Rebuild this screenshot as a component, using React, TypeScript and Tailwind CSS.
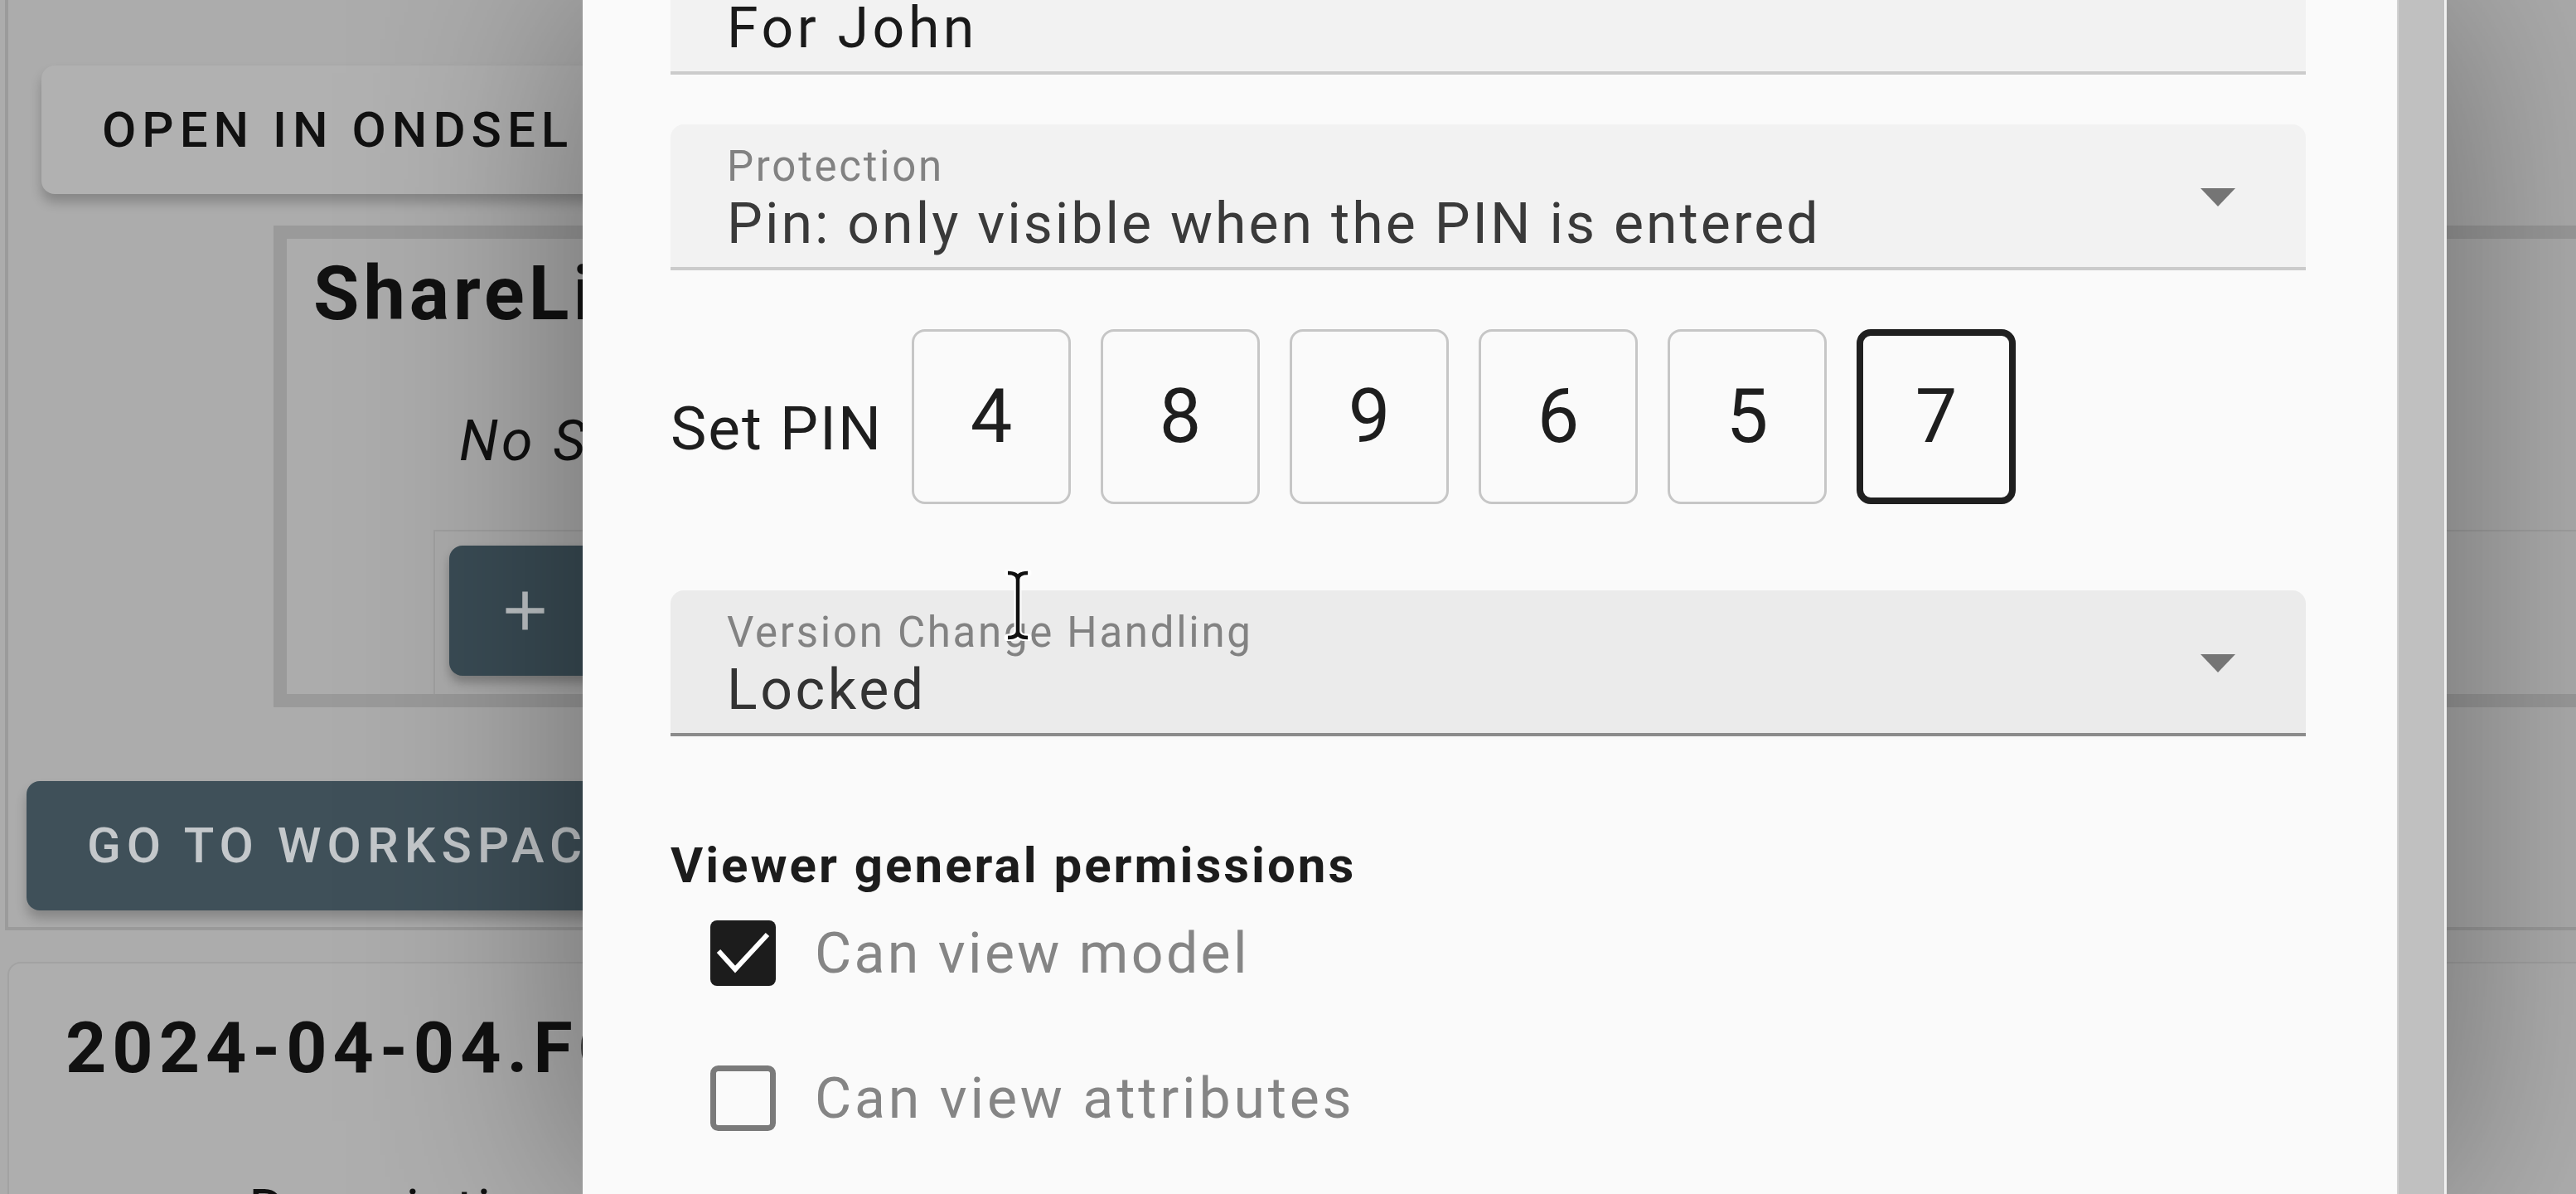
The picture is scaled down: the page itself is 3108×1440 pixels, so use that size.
import React from 'react';

const PIN = ['4', '8', '9', '6', '5', '7'];

function AddIcon() {
  return (
    <svg width="79" height="79" viewBox="0 0 24 24" fill="#c2c7ca">
      <path d="M19 13h-6v6h-2v-6H5v-2h6V5h2v6h6v2z" />
    </svg>
  );
}

function DropArrow() {
  return (
    <svg className="absolute right-[85px] top-[77px]" width="42" height="22" viewBox="0 0 42 22">
      <path d="M0 0h42L21 22z" fill="#757575" />
    </svg>
  );
}

function FilledField({
  label,
  value,
  hovered,
  select,
  valueClass,
}: {
  label?: string;
  value: string;
  hovered?: boolean;
  select?: boolean;
  valueClass: string;
}) {
  return (
    <div
      className={
        hovered
          ? 'relative h-[176px] rounded-t-[16px] border-b-4 border-[#8b8b8b] bg-[#ebebeb] pl-[68px] pt-[25px]'
          : 'relative h-[176px] rounded-t-[16px] border-b-4 border-[#cbcbcb] bg-[#f2f2f2] pl-[68px] pt-[25px]'
      }
    >
      <div className="h-[51px] whitespace-nowrap text-[51px] leading-[51px] tracking-[2.7px] text-[#828282]">{label}</div>
      <div className={`mt-[10px] whitespace-nowrap text-[68px] leading-[68px] ${valueClass}`}>{value}</div>
      {select && <DropArrow />}
    </div>
  );
}

function PinBox({ digit, active }: { digit: string; active?: boolean }) {
  return (
    <div
      className={
        active
          ? 'flex h-[211px] w-[192px] shrink-0 items-center justify-center rounded-[17px] border-[8px] border-[#1f1f1f] text-[90px] leading-[90px] text-[#1e1e1e]'
          : 'flex h-[211px] w-[192px] shrink-0 items-center justify-center rounded-[16px] border-[3px] border-[#c6c6c6] text-[90px] leading-[90px] text-[#1e1e1e]'
      }
    >
      {digit}
    </div>
  );
}

function CheckIcon({ checked }: { checked: boolean }) {
  return (
    <svg width="105" height="105" viewBox="0 0 105 105" className="shrink-0">
      {checked ? (
        <>
          <rect x="13" y="13" width="79" height="79" rx="8" fill="#1c1c1c" />
          <polyline points="23,50 43,72 82,30" fill="none" stroke="#ffffff" strokeWidth="6" />
        </>
      ) : (
        <rect x="16.5" y="16.5" width="72" height="72" rx="6" fill="none" stroke="#7a7a7a" strokeWidth="7" />
      )}
    </svg>
  );
}

function BackgroundPage() {
  return (
    <div className="w-[3400px]">
      <div className="ml-[6px] border-b-4 border-l-4 border-[#9b9b9b] pb-[20px] pt-[79px]">
        <div className="ml-[40px] flex h-[155px] w-[900px] items-center rounded-[16px] bg-[#b1b1b1] pl-[73px] text-[60px] font-medium uppercase leading-[60px] tracking-[7px] text-[#111] shadow-[0_10px_14px_rgba(0,0,0,0.22)]">
          Open in Ondsel
        </div>

        <div className="ml-[320px] mt-[38px] h-[581px] w-[3000px] border-[16px] border-r-0 border-[#9a9a9a] pl-[32px] pt-[22px]">
          <h2 className="text-[90px] font-bold leading-[90px] tracking-[5px] text-[#111]">ShareLinks</h2>
          <p className="ml-[176px] mt-[98px] text-[68px] italic leading-[68px] tracking-[4px] text-[#111]">No ShareLinks yet</p>
          <div className="-ml-[32px] mt-[73px] h-[198px] w-[2900px] pl-[177px]">
            <div className="h-full border-l-2 border-t-2 border-[#a0a0a0] pl-[17px] pt-[17px]">
              <div className="flex h-[157px] w-[700px] items-center rounded-[16px] bg-[#3a4c55] pl-[52px] shadow-[0_8px_12px_rgba(0,0,0,0.25)]">
                <AddIcon />
              </div>
            </div>
          </div>
        </div>

        <div className="ml-[22px] mt-[89px] flex h-[156px] w-[1000px] items-center rounded-[16px] bg-[#3f5059] pl-[73px] text-[60px] font-medium uppercase leading-[60px] tracking-[7px] text-[#c4c8cb] shadow-[0_10px_14px_rgba(0,0,0,0.22)]">
          Go to workspace
        </div>
      </div>

      <div className="ml-[9px] mt-[38px] h-[400px] w-[3200px] rounded-[16px] border-2 border-[#a2a2a2] bg-[#aeaeae] pl-[68px] pt-[59px]">
        <h3 className="text-[86px] font-bold leading-[86px] tracking-[7px] text-[#111]">2024-04-04.FCStd</h3>
        <p className="ml-[221px] mt-[119px] text-[68px] leading-[68px] tracking-[3px] text-[#111]">Description</p>
      </div>
    </div>
  );
}

function ShareLinkDialog() {
  return (
    <div className="absolute left-[703px] top-0 flex h-[1440px] w-[2249px] shadow-[0_0_250px_rgba(0,0,0,0.4)]">
      <div className="flex-1 overflow-hidden bg-[#fafafa] pl-[106px] pr-[110px]">
        <div className="-mt-[86px] flex flex-col">
          <FilledField value="For John" valueClass="tracking-[4.5px] text-[#1a1a1a]" />

          <div className="mt-[60px]">
            <FilledField
              label="Protection"
              value="Pin: only visible when the PIN is entered"
              valueClass="tracking-[3px] text-[#3a3a3a]"
              select
            />
          </div>

          <div className="mt-[71px] flex h-[211px] items-start">
            <div className="mt-[84px] w-[291px] shrink-0 whitespace-nowrap text-[73px] leading-[73px] tracking-[2px] text-[#1e1e1e]">
              Set PIN
            </div>
            <div className="flex gap-[36px]">
              {PIN.map((d, i) => (
                <PinBox key={i} digit={d} active={i === PIN.length - 1} />
              ))}
            </div>
          </div>

          <div className="mt-[104px]">
            <FilledField
              label="Version Change Handling"
              value="Locked"
              valueClass="tracking-[3.6px] text-[#333]"
              hovered
              select
            />
          </div>

          <h4 className="mt-[126px] text-[60px] font-bold leading-[60px] tracking-[3px] text-[#1c1c1c]">
            Viewer general permissions
          </h4>

          <div className="mt-[23px] flex h-[105px] items-center gap-[34px] pl-[35px]">
            <CheckIcon checked />
            <span className="text-[68px] leading-[68px] tracking-[3.3px] text-[#858585]">Can view model</span>
          </div>
          <div className="mt-[70px] flex h-[105px] items-center gap-[34px] pl-[35px]">
            <CheckIcon checked={false} />
            <span className="text-[68px] leading-[68px] tracking-[3.8px] text-[#858585]">Can view attributes</span>
          </div>
        </div>
      </div>
      <div className="w-[60px] border-l-2 border-r-[3px] border-l-[#d2d2d2] border-r-[#f0f0f0] bg-[#c0c0c0]" />
    </div>
  );
}

function TextCursor() {
  return (
    <svg className="absolute left-[1211px] top-[687px]" width="34" height="86" viewBox="0 0 34 86">
      <path
        d="M5 4 C12 4 17 6 17 12 L17 74 C17 80 12 82 5 82 M29 4 C22 4 17 6 17 12 M17 74 C17 80 22 82 29 82"
        fill="none"
        stroke="#ffffff"
        strokeWidth="9"
        strokeLinecap="round"
      />
      <path
        d="M5 4 C12 4 17 6 17 12 L17 74 C17 80 12 82 5 82 M29 4 C22 4 17 6 17 12 M17 74 C17 80 22 82 29 82"
        fill="none"
        stroke="#111111"
        strokeWidth="4.5"
      />
    </svg>
  );
}

export default function App() {
  return (
    <div className="relative h-[1440px] w-[3108px] overflow-hidden bg-[#acacac] font-['Roboto',sans-serif]">
      <BackgroundPage />
      <ShareLinkDialog />
      <TextCursor />
    </div>
  );
}
